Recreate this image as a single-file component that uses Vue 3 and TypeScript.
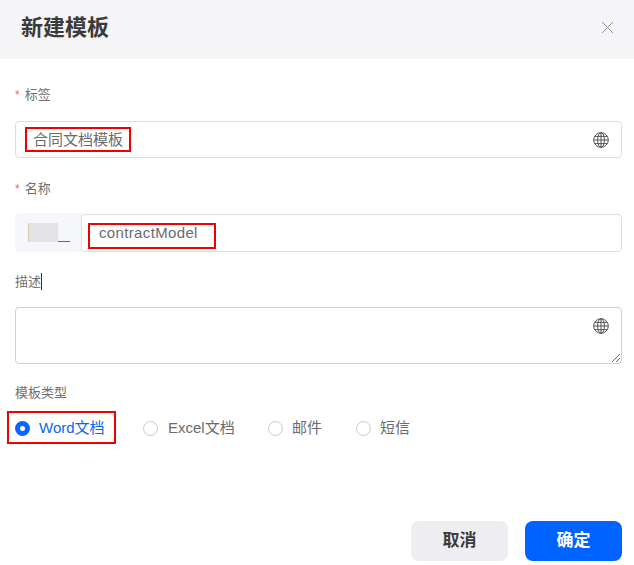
<script setup lang="ts">
const radios: { label: string; active?: boolean }[] = [
  { label: 'Word文档', active: true },
  { label: 'Excel文档' },
  { label: '邮件' },
  { label: '短信' },
]
</script>

<template>
  <div class="dialog">
    <header class="head">
      <h1>新建模板</h1>
      <svg class="close" width="13" height="13" viewBox="0 0 13 13" aria-hidden="true">
        <path d="M1 1L12 12M12 1L1 12" stroke="#8f8f98" stroke-width="1" fill="none" />
      </svg>
    </header>

    <main class="body">
      <div class="field f1">
        <label><i>*</i>标签</label>
        <div class="box one">
          <span class="mark mark-a"></span>
          <span class="val">合同文档模板</span>
          <svg class="globe" width="16" height="16" viewBox="0 0 16 16" aria-hidden="true">
            <g fill="none" stroke="#555" stroke-width="1">
              <circle cx="8" cy="8" r="7.3" />
              <ellipse cx="8" cy="8" rx="3.4" ry="7.3" />
              <path d="M8 .7V15.3M.7 8H15.3M1.7 4.4H14.3M1.7 11.6H14.3" />
            </g>
          </svg>
        </div>
      </div>

      <div class="field f2">
        <label><i>*</i>名称</label>
        <div class="group">
          <div class="prefix"><span class="blur"></span><span class="under"></span></div>
          <div class="box two">
            <span class="mark mark-b"></span>
            <span class="val">contractModel</span>
          </div>
        </div>
      </div>

      <div class="field f3">
        <label>描述<b class="caret"></b></label>
        <div class="box area">
          <svg class="globe" width="16" height="16" viewBox="0 0 16 16" aria-hidden="true">
            <g fill="none" stroke="#555" stroke-width="1">
              <circle cx="8" cy="8" r="7.3" />
              <ellipse cx="8" cy="8" rx="3.4" ry="7.3" />
              <path d="M8 .7V15.3M.7 8H15.3M1.7 4.4H14.3M1.7 11.6H14.3" />
            </g>
          </svg>
          <svg class="grip" width="9" height="9" viewBox="0 0 9 9" aria-hidden="true">
            <path d="M1 9L9 1M5 9L9 5" stroke="#666" stroke-width="1" fill="none" />
          </svg>
        </div>
      </div>

      <div class="field f4">
        <label>模板类型</label>
        <div class="radios">
          <div v-for="r in radios" :key="r.label" class="radio" :class="{ on: r.active }">
            <span class="dot"></span>
            <span class="txt">{{ r.label }}</span>
          </div>
          <span class="mark mark-c"></span>
        </div>
      </div>
    </main>

    <footer class="foot">
      <button class="btn cancel" type="button">取消</button>
      <button class="btn ok" type="button">确定</button>
    </footer>
  </div>
</template>

<style>
html, body { margin: 0; background: #fff; }
</style>

<style scoped>
.dialog {
  width: 634px;
  height: 565px;
  overflow: hidden;
  display: flex;
  flex-direction: column;
  background: #fff;
  font-family: "Liberation Sans", "Noto Sans CJK SC", sans-serif;
  color: #666;
}
.head {
  height: 59px;
  flex: none;
  box-sizing: border-box;
  padding: 0 20px 4px 21px;
  background: #f5f5f7;
  display: flex;
  align-items: center;
  justify-content: space-between;
}
.head h1 {
  margin: 0;
  font-size: 22px;
  line-height: 30px;
  font-weight: 700;
  color: #3b3b3b;
}
.body {
  flex: 1;
  padding: 0 12px 0 15px;
}
.field label {
  display: block;
  font-size: 13px;
  line-height: 18px;
  color: #707070;
}
.field label i {
  font-style: normal;
  color: #f0616d;
  margin-right: 5px;
  font-size: 12px;
}
.f1 { padding-top: 27px; }
.f2 { padding-top: 22px; }
.f3 { padding-top: 21px; }
.f4 { padding-top: 20px; }
.f1 label { margin-bottom: 17px; }
.f2 label { margin-bottom: 15px; }
.f3 label { margin-bottom: 16px; }
.f4 label { margin-bottom: 16px; }
.caret {
  display: inline-block;
  width: 1px;
  height: 17px;
  background: #333;
  vertical-align: -4px;
}
.box {
  position: relative;
  box-sizing: border-box;
  border: 1px solid #dcdde3;
  border-radius: 4px;
  background: #fff;
  display: flex;
  align-items: center;
}
.one { height: 37px; padding: 0 12px 0 17px; justify-content: space-between; }
.val { font-size: 15px; line-height: 20px; color: #6b6b6b; position: relative; }
.two .val { letter-spacing: 0.35px; }
.group { display: flex; height: 39px; }
.prefix {
  position: relative;
  width: 67px;
  flex: none;
  background: #f6f7fb;
  border-radius: 4px 0 0 4px;
  box-sizing: border-box;
}
.blur {
  position: absolute;
  left: 13px;
  top: 10px;
  width: 30px;
  height: 19px;
  background: #e3e3e5;
  border-left: 1px solid #dcc6ad;
  box-sizing: border-box;
}
.under {
  position: absolute;
  left: 43px;
  top: 28px;
  width: 12px;
  height: 1px;
  background: #666;
}
.two { flex: 1; height: 38px; margin-top: 1px; padding-left: 17px; margin-left: -1px; }
.area { height: 57px; border-color: #cfcfd2; }
.area .globe { position: absolute; right: 12px; top: 10px; }
.grip { position: absolute; right: 1px; bottom: 1px; }
.mark { position: absolute; border: 2px solid #f00000; box-sizing: border-box; pointer-events: none; }
.mark-a { left: 9px; top: 5px; width: 106px; height: 25px; }
.mark-b { left: 6px; top: 8px; width: 128px; height: 26px; }
.mark-c { left: -8px; top: -7px; width: 109px; height: 33px; }
.radios { position: relative; display: flex; align-items: center; height: 20px; }
.radio { display: flex; align-items: center; font-size: 15px; line-height: 20px; color: #6b6b6b; }
.radio:nth-child(1) { width: 128px; }
.radio:nth-child(2) { width: 125px; }
.radio:nth-child(3) { width: 88px; }
.dot {
  width: 15px;
  height: 15px;
  box-sizing: border-box;
  border: 1px solid #c9c9cc;
  border-radius: 50%;
  margin-right: 9px;
  flex: none;
}
.radio:nth-child(2) .dot { margin-right: 10px; }
.on { color: #0a66f5; }
.on .dot { border: 5px solid #0a64ff; background: #fff; }
.foot {
  flex: none;
  display: flex;
  justify-content: flex-end;
  gap: 17px;
  padding: 0 12px 4px;
}
.btn {
  width: 97px;
  height: 40px;
  border: 0;
  border-radius: 8px;
  font: 700 17px/40px "Liberation Sans", "Noto Sans CJK SC", sans-serif;
  padding: 0;
}
.cancel { background: #eeeef2; color: #3b3b3b; }
.ok { background: #0063ff; color: #fff; }
</style>
